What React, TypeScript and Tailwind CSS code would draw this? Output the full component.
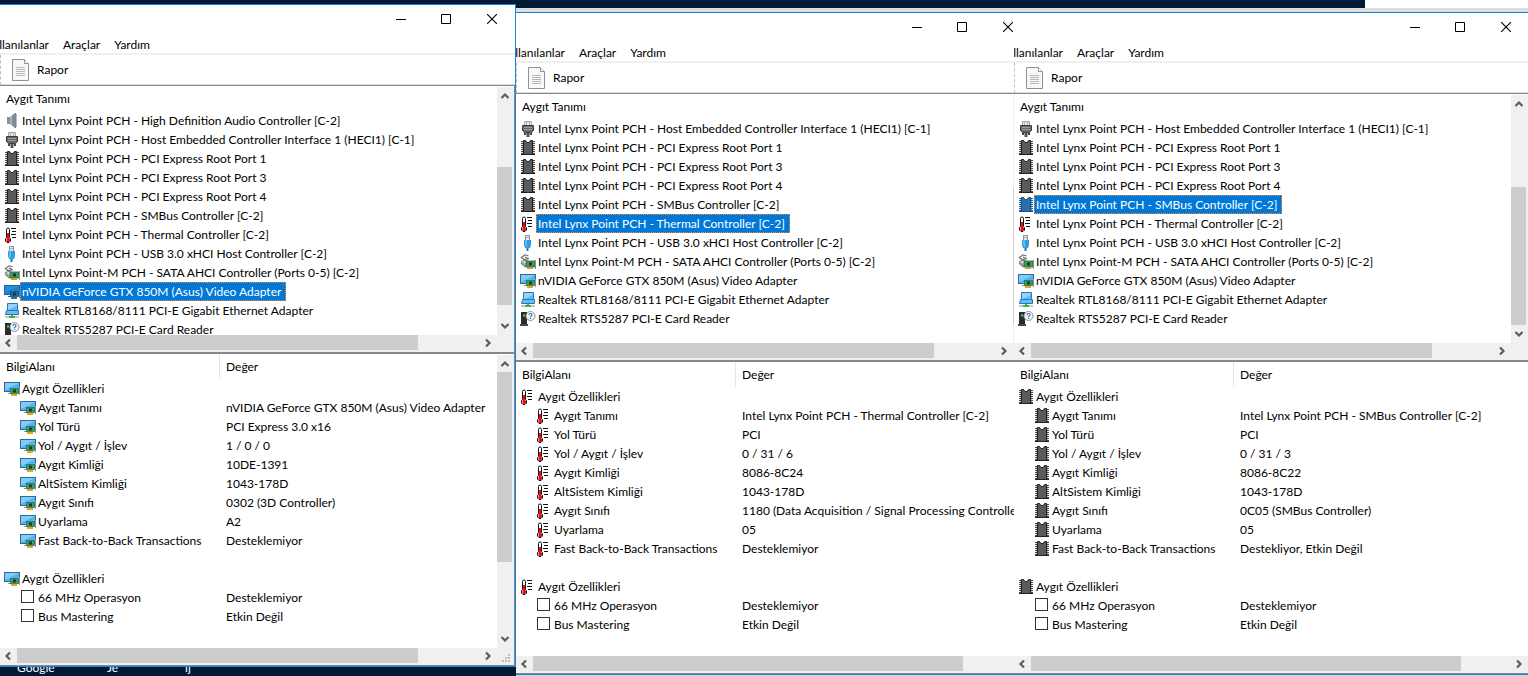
import type { ReactNode } from "react";
import { clsx } from "clsx";

type IconName =
  | "speaker"
  | "plug"
  | "chip"
  | "thermo"
  | "usb"
  | "sata"
  | "video"
  | "network"
  | "reader";

interface Device {
  label: string;
  icon: IconName;
}

interface Thumb {
  start: number;
  size: number;
}

interface DeviceWindow {
  id: string;
  icon: IconName;
  devices: Device[];
  selected: string;
  listThumb: Thumb;
  detailThumb?: Thumb;
  details: [string, string][];
  flags: [string, string][];
}

const commonDevices: Device[] = [
  { label: "Intel Lynx Point PCH - Host Embedded Controller Interface 1 (HECI1) [C-1]", icon: "plug" },
  { label: "Intel Lynx Point PCH - PCI Express Root Port 1", icon: "chip" },
  { label: "Intel Lynx Point PCH - PCI Express Root Port 3", icon: "chip" },
  { label: "Intel Lynx Point PCH - PCI Express Root Port 4", icon: "chip" },
  { label: "Intel Lynx Point PCH - SMBus Controller [C-2]", icon: "chip" },
  { label: "Intel Lynx Point PCH - Thermal Controller [C-2]", icon: "thermo" },
  { label: "Intel Lynx Point PCH - USB 3.0 xHCI Host Controller [C-2]", icon: "usb" },
  { label: "Intel Lynx Point-M PCH - SATA AHCI Controller (Ports 0-5) [C-2]", icon: "sata" },
  { label: "nVIDIA GeForce GTX 850M (Asus) Video Adapter", icon: "video" },
  { label: "Realtek RTL8168/8111 PCI-E Gigabit Ethernet Adapter", icon: "network" },
  { label: "Realtek RTS5287 PCI-E Card Reader", icon: "reader" },
];

const videoWindow: DeviceWindow = {
  id: "video",
  icon: "video",
  devices: [
    { label: "Intel Lynx Point PCH - High Definition Audio Controller [C-2]", icon: "speaker" },
    ...commonDevices,
  ],
  selected: "nVIDIA GeForce GTX 850M (Asus) Video Adapter",
  listThumb: { start: 29.4, size: 64.5 },
  detailThumb: { start: 0, size: 73.4 },
  details: [
    ["Aygıt Tanımı", "nVIDIA GeForce GTX 850M (Asus) Video Adapter"],
    ["Yol Türü", "PCI Express 3.0 x16"],
    ["Yol / Aygıt / İşlev", "1 / 0 / 0"],
    ["Aygıt Kimliği", "10DE-1391"],
    ["AltSistem Kimliği", "1043-178D"],
    ["Aygıt Sınıfı", "0302 (3D Controller)"],
    ["Uyarlama", "A2"],
    ["Fast Back-to-Back Transactions", "Desteklemiyor"],
  ],
  flags: [
    ["66 MHz Operasyon", "Desteklemiyor"],
    ["Bus Mastering", "Etkin Değil"],
  ],
};

const thermalWindow: DeviceWindow = {
  id: "thermal",
  icon: "thermo",
  devices: commonDevices,
  selected: "Intel Lynx Point PCH - Thermal Controller [C-2]",
  listThumb: { start: 35, size: 64.5 },
  details: [
    ["Aygıt Tanımı", "Intel Lynx Point PCH - Thermal Controller [C-2]"],
    ["Yol Türü", "PCI"],
    ["Yol / Aygıt / İşlev", "0 / 31 / 6"],
    ["Aygıt Kimliği", "8086-8C24"],
    ["AltSistem Kimliği", "1043-178D"],
    ["Aygıt Sınıfı", "1180 (Data Acquisition / Signal Processing Controller)"],
    ["Uyarlama", "05"],
    ["Fast Back-to-Back Transactions", "Desteklemiyor"],
  ],
  flags: [
    ["66 MHz Operasyon", "Desteklemiyor"],
    ["Bus Mastering", "Etkin Değil"],
  ],
};

const smbusWindow: DeviceWindow = {
  id: "smbus",
  icon: "chip",
  devices: commonDevices,
  selected: "Intel Lynx Point PCH - SMBus Controller [C-2]",
  listThumb: { start: 35, size: 64.5 },
  details: [
    ["Aygıt Tanımı", "Intel Lynx Point PCH - SMBus Controller [C-2]"],
    ["Yol Türü", "PCI"],
    ["Yol / Aygıt / İşlev", "0 / 31 / 3"],
    ["Aygıt Kimliği", "8086-8C22"],
    ["AltSistem Kimliği", "1043-178D"],
    ["Aygıt Sınıfı", "0C05 (SMBus Controller)"],
    ["Uyarlama", "05"],
    ["Fast Back-to-Back Transactions", "Destekliyor, Etkin Değil"],
  ],
  flags: [
    ["66 MHz Operasyon", "Desteklemiyor"],
    ["Bus Mastering", "Etkin Değil"],
  ],
};

// 16x16 drawings, tinted is the blue wash of a selected row
const drawings: Record<IconName, (tinted: boolean) => ReactNode> = {
  speaker: () => (
    <>
      <rect x="3" y="4" width="3" height="7" fill="#8c9299" />
      <path d="M6 4 11 0v15l-5-4z" fill="#a9b0b7" />
      <path d="M8 2.500 11 0v15l-3-2.500z" fill="#858c94" />
      <path d="M11.500 0v15" stroke="#7d848b" />
      <path d="M12.500 1v13" stroke="#b9bfc4" />
    </>
  ),
  plug: () => (
    <>
      <path d="M4.500 5V.500h7V5" fill="#e8e8e8" stroke="#a5a5a5" />
      <path d="M6.500 1v3M9.500 1v3" stroke="#b4b4b4" />
      <path d="M2.500 4.500h11v5l-2 2h-7l-2-2z" fill="#6a6a6a" stroke="#3c3c3c" />
      <path d="M4 6.500h8M4 8.500h8" stroke="#9a9a9a" />
      <path d="M5 12v2M11 12v2" stroke="#444" strokeWidth="2" />
      <path d="M8 12v4" stroke="#555" strokeWidth="3" />
    </>
  ),
  chip: (tinted) => (
    <>
      <path
        d="M1 1.500h3M1 3.500h3M1 5.500h3M1 7.500h3M1 9.500h3M1 11.500h3M1 13.500h3M12 1.500h3M12 3.500h3M12 5.500h3M12 7.500h3M12 9.500h3M12 11.500h3M12 13.500h3"
        stroke={tinted ? "#2a6299" : "#4a4a4a"}
      />
      <path
        d="M2 2.500h1M2 4.500h1M2 6.500h1M2 8.500h1M2 10.500h1M2 12.500h1M13 2.500h1M13 4.500h1M13 6.500h1M13 8.500h1M13 10.500h1M13 12.500h1"
        stroke={tinted ? "#8fc1ec" : "#c8c8c8"}
      />
      <path
        d="M3.500 .500h2l1.500 2h2l1.500-2h2v14h-9z"
        fill={tinted ? "#2f6ea6" : "#5a5a5a"}
        stroke={tinted ? "#1d4f80" : "#222"}
      />
      <path d="M1 14.500h14" stroke={tinted ? "#1d4f80" : "#222"} />
    </>
  ),
  thermo: () => (
    <>
      <path
        d="M2.500 2.500q0-1.500 1.500-1.500t1.500 1.500v8l1 1v2.500l-1.500 1.500h-2l-1.500-1.500v-2.500l1-1z"
        fill="#fff"
        stroke="#111"
      />
      <path d="M3 6h2v5l1 1v2l-1 1H3l-1-1v-2l1-1z" fill="#ee0d12" />
      <path d="M2.500 12v2" stroke="#ff9a9a" />
      <path d="M7 1.500h5M8 4.500h4M7 7.500h5M8 10.500h4" stroke="#111" />
    </>
  ),
  usb: () => (
    <>
      <rect x="5.500" y="0.500" width="4" height="5" fill="#e3e7ea" stroke="#8d969e" />
      <path d="M7 2v1M9 2v1" stroke="#78828c" />
      <path d="M4 5h7v5l-1 3H5l-1-3z" fill="#2d9ee0" />
      <path d="M5 5h2v7H6l-1-3z" fill="#62bdf0" />
      <path d="M7.500 13v3" stroke="#1872b8" strokeWidth="2" />
    </>
  ),
  sata: () => (
    <>
      <path d="M8.500 2 5 .8 1.500 3.500 4 5.500l3.500-.5M5 3l4 2" fill="none" stroke="#666" strokeWidth="1.200" />
      <path d="M1 7.500 6 6l3 2-4 2.500z" fill="#e2e2e2" stroke="#666" strokeWidth=".8" />
      <path d="m1 9 4 3.500 2-1" fill="none" stroke="#777" strokeWidth="1.200" />
      <rect x="6" y="7" width="9" height="6" fill="#3f9a63" stroke="#216541" strokeWidth=".8" />
      <rect x="9" y="8.500" width="3" height="3" fill="#173b29" />
      <path d="M7 14h6" stroke="#d59a1e" strokeWidth="2" />
      <path d="M15.500 6v9" stroke="#8b9196" />
    </>
  ),
  video: (tinted) => (
    <>
      <rect x="0.500" y="1.500" width="15" height="9" fill={tinted ? "#1a80d2" : "#52b3f2"} stroke={tinted ? "#1765a8" : "#2c6c9c"} />
      <path d="M1 2h14L1 9z" fill={tinted ? "#2b8bd8" : "#83ccf8"} />
      <path d="M4 12.500h3" stroke={tinted ? "#1765a8" : "#7f98a8"} />
      <rect x="6.500" y="7.500" width="8" height="5" fill={tinted ? "#1c6b9a" : "#3a9a68"} stroke={tinted ? "#15547e" : "#2b7550"} strokeWidth=".8" />
      <rect x="9" y="8.500" width="3" height="3" fill={tinted ? "#0e3c63" : "#18402b"} />
      <path d="M15.500 6v8" stroke={tinted ? "#3f83b5" : "#8c9499"} />
      <path d="M7 14h6" stroke={tinted ? "#2d7099" : "#eba51c"} strokeWidth="2" />
    </>
  ),
  network: () => (
    <>
      <path d="M3.500 .500h10v7h-10z" fill="#5db9f4" stroke="#2878b3" />
      <path d="M4 1h9v2L4 7z" fill="#95d4fa" />
      <path d="M2.500 7.500h12v4h-13z" fill="#64bdf5" stroke="#2878b3" />
      <path d="M1 14h14" stroke="#c4cbd0" strokeWidth="2" />
      <path d="M5 14h6M8 12v2" stroke="#3ab54a" strokeWidth="2" />
    </>
  ),
  reader: () => (
    <>
      <path d="M1 1h6v13H1z" fill="#2b2b2b" />
      <path d="M0 14h8" stroke="#484848" strokeWidth="2" />
      <path d="M3 4.500h2" stroke="#36e04a" strokeWidth="2" />
      <circle cx="10.500" cy="5" r="4.500" fill="#f3f6f8" stroke="#8e979e" />
      <path d="M9 4q0-1.500 1.500-1.500T12 4q0 .7-1.500 1.500v.8M10.500 7v1" fill="none" stroke="#2a7dc4" strokeWidth="1.200" />
    </>
  ),
};

function Icon({ name, tinted = false }: { name: IconName; tinted?: boolean }) {
  return (
    <svg viewBox="0 0 16 16" className="h-4 w-4 shrink-0" aria-hidden="true">
      {drawings[name](tinted)}
    </svg>
  );
}

const arrows = {
  up: "M1.500 7 5 3.500 8.500 7",
  down: "M1.500 2 5 5.500 8.500 2",
  left: "M6 1.500 2.500 5 6 8.500",
  right: "M2 1.500 5.500 5 2 8.500",
};

function ArrowButton({ dir }: { dir: keyof typeof arrows }) {
  const vertical = dir === "up" || dir === "down";
  return (
    <button
      type="button"
      aria-label={dir}
      className={clsx(
        "flex shrink-0 items-center justify-center",
        vertical ? "h-[17px] w-[15px]" : "h-[15px] w-[17px]"
      )}
    >
      <svg viewBox="0 0 10 10" className="h-[10px] w-[10px]">
        <path d={arrows[dir]} fill="none" stroke="#5c5c5c" strokeWidth="2.200" />
      </svg>
    </button>
  );
}

function VScroll({ thumb }: { thumb: Thumb }) {
  return (
    <div className="mt-px flex w-[17px] shrink-0 flex-col bg-[#f0f0f0]">
      <ArrowButton dir="up" />
      <div className="flex min-h-0 flex-1 flex-col">
        <div style={{ height: `${thumb.start}%` }} />
        <div className="w-[15px] bg-[#cdcdcd]" style={{ height: `${thumb.size}%` }} />
      </div>
      <ArrowButton dir="down" />
    </div>
  );
}

function HScroll({ size, corner }: { size: number; corner?: ReactNode }) {
  return (
    <div className="flex h-[17px] shrink-0 bg-[#f0f0f0]">
      <ArrowButton dir="left" />
      <div className="flex-1">
        <div className="h-[15px] bg-[#cdcdcd]" style={{ width: `${size}%` }} />
      </div>
      <ArrowButton dir="right" />
      {corner}
    </div>
  );
}

function Grip() {
  return (
    <svg viewBox="0 0 17 17" className="h-[17px] w-[17px]" fill="#bfbfbf">
      <path d="M11 6h2v2h-2zM8 9h2v2H8zM11 9h2v2h-2zM5 12h2v2H5zM8 12h2v2H8zM11 12h2v2h-2z" />
    </svg>
  );
}

function TitleBar() {
  return (
    <div className="flex h-7 shrink-0 justify-end">
      <button type="button" aria-label="Simge durumuna küçült" className="flex w-[45px] items-center justify-center">
        <svg viewBox="0 0 10 10" className="h-[10px] w-[10px]">
          <path d="M0 5.500h10" stroke="#000" />
        </svg>
      </button>
      <button type="button" aria-label="Ekranı kapla" className="flex w-[46px] items-center justify-center">
        <svg viewBox="0 0 10 10" className="h-[10px] w-[10px]">
          <path d="M.5.5h9v9h-9z" fill="none" stroke="#000" />
        </svg>
      </button>
      <button type="button" aria-label="Kapat" className="flex w-[46px] items-center justify-center">
        <svg viewBox="0 0 10 10" className="h-[10px] w-[10px]">
          <path d="m0 0 10 10M10 0 0 10" stroke="#000" strokeWidth="1.100" />
        </svg>
      </button>
    </div>
  );
}

function MenuBar() {
  return (
    <nav className="flex h-[22px] shrink-0 gap-[14px] border-b-2 border-[#f0f0f0] leading-6">
      <button type="button" className="flex w-[49px] justify-end overflow-hidden">
        llanılanlar
      </button>
      <button type="button">Araçlar</button>
      <button type="button">Yardım</button>
    </nav>
  );
}

function Toolbar() {
  return (
    <div className="shrink-0 border-b border-[#828790]">
      <div className="h-[30px] border-b border-l border-b-[#dcdcdc] border-l-[#bdbdbd] [border-left-style:dashed]">
        <button type="button" className="flex h-full items-center gap-[7px] pl-[11px]">
          <svg viewBox="0 0 18 22" className="h-[22px] w-[18px]">
            <path d="M.5.5h12l4 4v17H.5z" fill="#f7f8f8" stroke="#8e9194" />
            <path d="M12.500.5v4h4" fill="#fff" stroke="#8e9194" />
            <path d="M4 8.500h9M4 10.500h9M4 12.500h9M4 14.500h9M4 16.500h9" stroke="#b5b8ba" />
          </svg>
          Rapor
        </button>
      </div>
    </div>
  );
}

function DeviceList({ win }: { win: DeviceWindow }) {
  return (
    <section className="shrink-0">
      <div className="flex">
        <div className="min-w-0 flex-1">
          <h2 className="h-[25px] pl-[6px] leading-[26px]">Aygıt Tanımı</h2>
          <ul className="h-[224px] overflow-hidden">
            {win.devices.map((device) => {
              const active = device.label === win.selected;
              return (
                <li key={device.label} className="flex h-[19px] items-center pl-1">
                  <Icon name={device.icon} tinted={active} />
                  <button
                    type="button"
                    className={clsx(
                      "h-[19px] whitespace-nowrap border border-dotted pl-px pr-1 leading-[17px]",
                      active ? "border-[#ff8728] bg-[#0078d7] text-white" : "border-transparent"
                    )}
                  >
                    {device.label}
                  </button>
                </li>
              );
            })}
          </ul>
        </div>
        <VScroll thumb={win.listThumb} />
      </div>
      <HScroll size={86.6} corner={<div className="w-[17px]" />} />
    </section>
  );
}

function GroupRow({ icon }: { icon: IconName }) {
  return (
    <tr className="h-[19px]">
      <td colSpan={2} className="p-0">
        <div className="flex items-center gap-[2px] pl-1">
          <Icon name={icon} />
          Aygıt Özellikleri
        </div>
      </td>
    </tr>
  );
}

function DetailTable({ win }: { win: DeviceWindow }) {
  return (
    <section className="flex min-h-0 flex-1 flex-col border-t-2 border-[#828790]">
      <div className="flex min-h-0 flex-1">
        <div className="min-w-0 flex-1 overflow-hidden">
          <table className="w-full table-fixed border-separate border-spacing-0 whitespace-nowrap text-left">
            <thead>
              <tr className="h-[25px]">
                <th className="w-[220px] border-r border-[#e5e5e5] p-0 pl-[6px] font-normal">BilgiAlanı</th>
                <th className="p-0 pl-[6px] font-normal">Değer</th>
              </tr>
            </thead>
            <tbody>
              <GroupRow icon={win.icon} />
              {win.details.map(([name, value]) => (
                <tr key={name} className="h-[19px]">
                  <td className="p-0">
                    <div className="flex items-center gap-[2px] pl-5">
                      <Icon name={win.icon} />
                      {name}
                    </div>
                  </td>
                  <td className="p-0 pl-[6px]">{value}</td>
                </tr>
              ))}
              <tr className="h-[19px]">
                <td colSpan={2} className="p-0" />
              </tr>
              <GroupRow icon={win.icon} />
              {win.flags.map(([name, value]) => (
                <tr key={name} className="h-[19px]">
                  <td className="p-0">
                    <label className="flex items-start gap-1 pl-[21px]">
                      <input
                        type="checkbox"
                        id={`${win.id}-${name}`}
                        className="mt-[2px] h-[13px] w-[13px] appearance-none border border-[#333] bg-white"
                      />
                      {name}
                    </label>
                  </td>
                  <td className="p-0 pl-[6px]">{value}</td>
                </tr>
              ))}
            </tbody>
          </table>
        </div>
        {win.detailThumb && <VScroll thumb={win.detailThumb} />}
      </div>
      <HScroll size={win.detailThumb ? 86.6 : 89.6} corner={win.detailThumb && <Grip />} />
    </section>
  );
}

function AppWindow({ win }: { win: DeviceWindow }) {
  return (
    <article className="flex min-h-0 flex-1 flex-col border-y border-r border-[#1883d7] bg-white">
      <TitleBar />
      <MenuBar />
      <Toolbar />
      <div className="flex min-h-0 flex-1 flex-col border-b border-r border-[#828790]">
        <DeviceList win={win} />
        <DetailTable win={win} />
      </div>
    </article>
  );
}

export default function App() {
  return (
    <main className="flex h-screen min-h-[640px] overflow-hidden bg-[#001a36] font-['Lato','Noto_Sans',sans-serif] text-[12px] leading-[19px] text-black">
      <div className="flex min-w-0 flex-1 flex-col pt-1">
        <AppWindow win={videoWindow} />
        {/* desktop icon labels peeking out below the window */}
        <div className="flex h-[9px] items-end overflow-hidden pl-[17px] text-white">
          <span className="w-[90px] leading-4">Google</span>
          <span className="w-[78px] leading-4">Je</span>
          <span className="leading-4">ij</span>
        </div>
      </div>

      <div className="-mr-[18px] flex min-w-0 flex-1 flex-col">
        <div className="h-2" />
        <div className="h-1 bg-[#dcdee0]" />
        <AppWindow win={thermalWindow} />
        <div className="h-px bg-[#c9d8e4]" />
      </div>

      <div className="z-10 -mr-[2px] flex min-w-0 flex-1 flex-col">
        <div className="flex h-2 justify-end">
          <div className="w-[32%] bg-white" />
        </div>
        <div className="h-1 bg-[#dcdee0]" />
        <AppWindow win={smbusWindow} />
        <div className="h-px bg-[#c9d8e4]" />
      </div>
    </main>
  );
}
